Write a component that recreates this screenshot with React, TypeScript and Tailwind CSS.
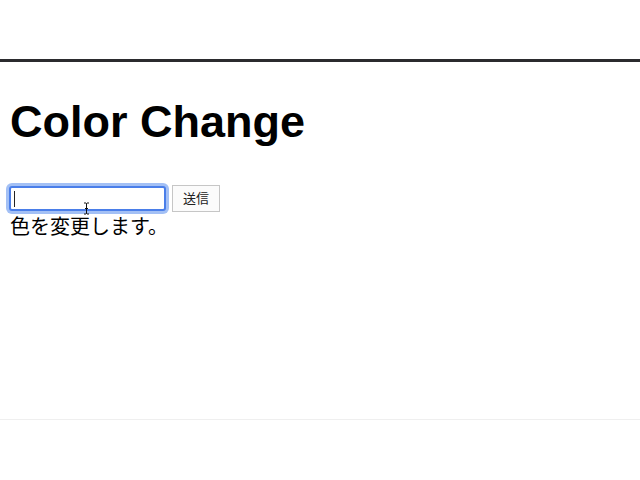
export default function App() {
    return (
        <div className="w-[640px] h-[480px] bg-white flex flex-col text-black" style={{ fontFamily: '"Liberation Sans", "Noto Sans CJK JP", sans-serif' }}>
            <div className="h-[59px] shrink-0" />
            <div className="h-[3px] shrink-0 bg-[#2b2b2e]" />

            <div className="px-[10px] h-[357px] shrink-0">
                <h1 className="mt-[37px] text-[45px] font-bold leading-none">Color Change</h1>

                <div className="mt-[41px] flex items-center gap-[6px]">
                    <div className="relative">
                        <div className="h-[25px] w-[157px] -ml-[1px] rounded-[3px] border-2 border-[#4a7ee9] ring-[3px] ring-[#a3c0f5] bg-white flex items-center pl-[3px]">
                            <span className="w-[1px] h-[16px] bg-[#222]" />
                        </div>
                        <svg className="absolute left-[73px] top-[16px]" width="7" height="13" viewBox="0 0 7 13">
                            <path d="M1 1h2l0.5 0.5L4 1h2M3.5 1.5v10M1 12h2l0.5-0.5L4 12h2M2 6.5h3" stroke="#111" strokeWidth="1" fill="none" />
                        </svg>
                    </div>
                    <button className="h-[27px] w-[48px] border border-[#c6c6c6] bg-[#fbfbfb] text-[13px] text-[#222]">送信</button>
                </div>

                <p className="mt-[3px] text-[20px] leading-[25px]">色を変更します。</p>
            </div>

            <div className="h-[1px] shrink-0 bg-[#efefef]" />
        </div>
    );
}
